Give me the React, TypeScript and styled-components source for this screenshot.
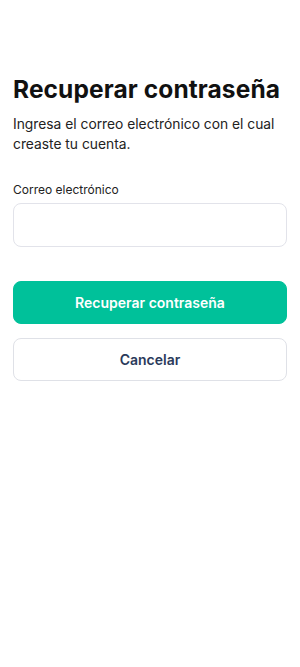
import { createGlobalStyle } from "styled-components";
import styled from "styled-components";

const GlobalStyle = createGlobalStyle`
  * { box-sizing: border-box; }
  body {
    margin: 0;
    background: #ffffff;
    font-family: Inter, "Noto Sans", sans-serif;
    color: #111111;
  }
`;

const App = () => {
  return (
    <>
      <GlobalStyle />
      <Page>
        <Title>Recuperar contraseña</Title>
        <Subtitle>
          Ingresa el correo electrónico con el cual creaste tu cuenta.
        </Subtitle>
        <Field>
          <Label htmlFor="email">Correo electrónico</Label>
          <Input id="email" type="email" />
        </Field>
        <Actions>
          <Button variant="primary">Recuperar contraseña</Button>
          <Button variant="secondary">Cancelar</Button>
        </Actions>
      </Page>
    </>
  );
};

const Page = styled.div`
  display: flex;
  flex-direction: column;
  min-height: 667px;
  padding: 75px 13px 0;
`;

const Title = styled.h1`
  margin: 0;
  font-size: 24.5px;
  font-weight: 700;
  line-height: 28px;
  letter-spacing: 0.1px;
  color: #111111;
`;

const Subtitle = styled.p`
  margin: 11px 0 0;
  font-size: 13.8px;
  line-height: 20px;
  color: #222222;
`;

const Field = styled.div`
  display: flex;
  flex-direction: column;
  gap: 5px;
  margin-top: 28px;
`;

const Label = styled.label`
  font-size: 12px;
  line-height: 16px;
  color: #222222;
`;

const Input = styled.input`
  height: 44px;
  width: 100%;
  border: 1px solid #e2e3ea;
  border-radius: 8px;
  padding: 0 12px;
  font-family: inherit;
  font-size: 14px;
  outline: none;
`;

const Actions = styled.div`
  display: flex;
  flex-direction: column;
  gap: 14px;
  margin-top: 34px;
`;

const Button = styled.button<{ variant: "primary" | "secondary" }>`
  height: 43px;
  width: 100%;
  border-radius: 8px;
  font-family: inherit;
  font-size: 14px;
  font-weight: 600;
  cursor: pointer;
  border: 1px solid
    ${({ variant }) => (variant === "primary" ? "#00c19a" : "#dfe1e7")};
  background: ${({ variant }) => (variant === "primary" ? "#00c19a" : "#ffffff")};
  color: ${({ variant }) => (variant === "primary" ? "#ffffff" : "#2a3a5a")};
`;

export default App;
